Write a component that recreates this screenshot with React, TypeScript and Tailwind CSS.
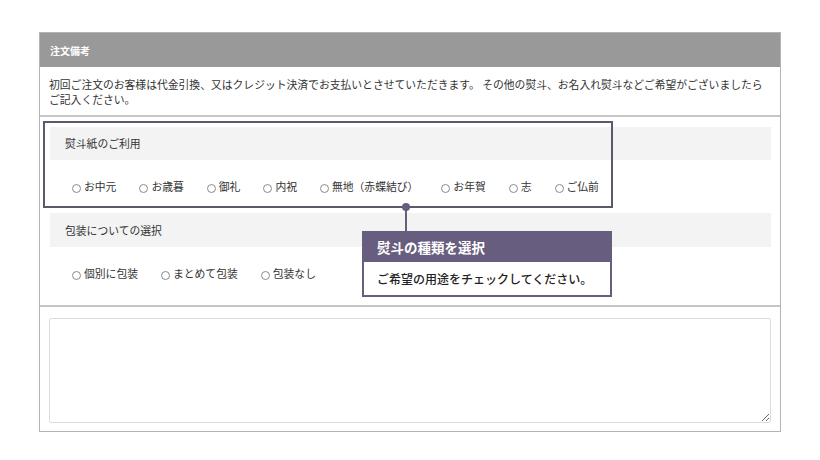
const noshiOptions = ['お中元', 'お歳暮', '御礼', '内祝', '無地（赤蝶結び）', 'お年賀', '志', 'ご仏前'];
const wrapOptions = ['個別に包装', 'まとめて包装', '包装なし'];

function Radio({ label }: { label: string }) {
  return (
    <label className="flex items-center mr-[23px] cursor-pointer">
      <span className="mt-[3px] w-[9px] h-[9px] rounded-full border border-[#8a8a8a] bg-white" />
      <span className="ml-[3px]">{label}</span>
    </label>
  );
}

export default function App() {
  return (
    <div
      className="w-[820px] min-h-[460px] bg-white pt-[32px] pl-[39px] text-[#333]"
      style={{ fontFamily: '"Noto Sans CJK JP", "Noto Sans", sans-serif' }}
    >
      <div className="relative w-[742px] border border-[#b3b3b3]">
        <div className="h-[34px] bg-[#999999] px-[10px] flex items-center text-white font-bold text-[10px]">
          注文備考
        </div>

        <div className="px-[9px] pt-[10px] pb-[8px] text-[10.8px] leading-[15px]">
          初回ご注文のお客様は代金引換、又はクレジット決済でお支払いとさせていただきます。 その他の熨斗、お名入れ熨斗などご希望がございましたらご記入ください。
        </div>

        <div className="border-t-2 border-[#c6c6c6] pl-[10px] pr-[9px] pt-[10px] pb-[5px] text-[10.8px]">
          <div className="h-[33px] bg-[#f3f3f3] pl-[15px] flex items-center">熨斗紙のご利用</div>
          <div className="h-[53px] pl-[22px] flex items-center">
            {noshiOptions.map((o) => (
              <Radio key={o} label={o} />
            ))}
          </div>
          <div className="h-[34px] bg-[#f3f3f3] pl-[15px] flex items-center">包装についての選択</div>
          <div className="h-[53px] pl-[22px] flex items-center">
            {wrapOptions.map((o) => (
              <Radio key={o} label={o} />
            ))}
          </div>
        </div>

        <div className="border-t-2 border-[#c6c6c6] pl-[9px] pr-[9px] pt-[11px] pb-[8px]">
          <textarea className="block w-full h-[105px] border border-[#dcdcdc] rounded-[2px] resize-y outline-none" />
        </div>

        {/* tutorial highlight */}
        <div className="absolute left-[3px] top-[88px] w-[570px] h-[87px] border-2 border-[#5d586b] pointer-events-none" />
        <div className="absolute left-[365px] top-[174px] w-[2px] h-[24px] bg-[#675d7e]" />
        <div className="absolute left-[362px] top-[170px] w-[8px] h-[8px] rounded-full bg-[#675d7e]" />
        <div className="absolute left-[322px] top-[198px] w-[250px] border-2 border-[#675d7e] bg-white">
          <div className="h-[29px] bg-[#675d7e] pl-[13px] flex items-center text-white font-bold text-[13.5px]">
            熨斗の種類を選択
          </div>
          <div className="h-[33px] pl-[13px] flex items-center text-[12px] font-medium text-[#222]">
            ご希望の用途をチェックしてください。
          </div>
        </div>
      </div>
    </div>
  );
}
